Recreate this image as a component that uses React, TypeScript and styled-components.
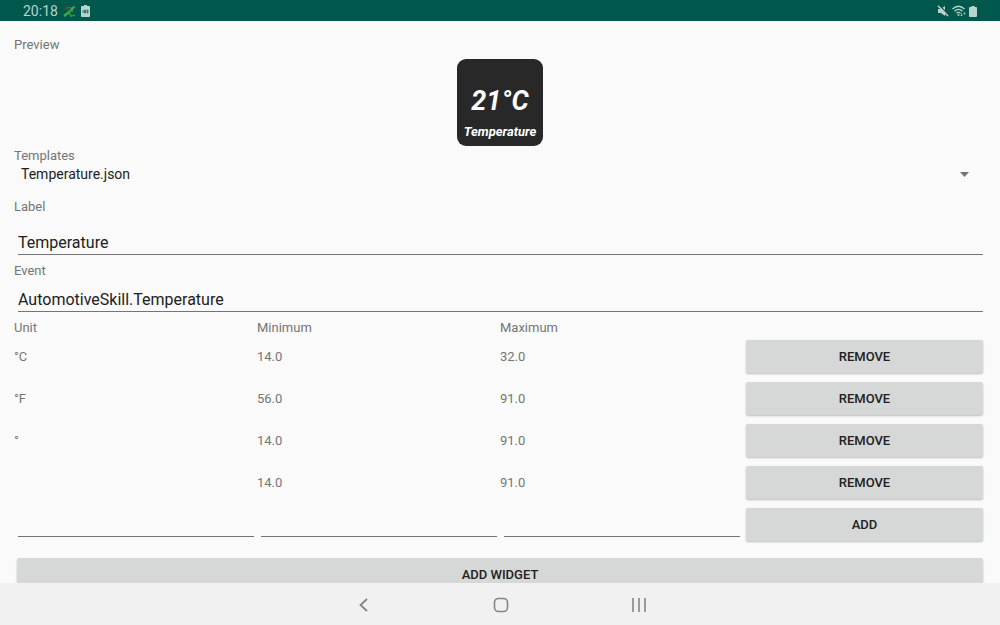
import React from "react";
import styled, { createGlobalStyle } from "styled-components";

const GlobalStyle = createGlobalStyle`
  *, *::before, *::after { box-sizing: border-box; }
  body { margin: 0; background: #fafafa; font-family: Roboto, sans-serif; }
  button, input, select { font-family: inherit; }
`;

const Screen = styled.div`
  display: flex;
  flex-direction: column;
  height: 100vh;
  color: #212121;
`;

const StatusBar = styled.header`
  display: flex;
  flex: none;
  align-items: center;
  justify-content: space-between;
  height: 21px;
  padding: 0 23px;
  background: #00574b;
  color: #b9d3cf;
  font-size: 14px;
  line-height: 21px;
`;

const StatusGroup = styled.div<{ $gap: number }>`
  display: flex;
  align-items: center;
  gap: ${(p) => p.$gap}px;
  padding-top: 1px;
`;

const Content = styled.main`
  flex: 1;
  min-height: 0;
  padding: 15px 14px 0;
  overflow-y: auto;
  scrollbar-width: none;
`;

const Caption = styled.label`
  display: block;
  color: #757575;
  font-size: 13px;
  line-height: 17px;
`;

const Tile = styled.section`
  display: flex;
  flex-direction: column;
  align-items: center;
  justify-content: flex-end;
  width: 86px;
  height: 87px;
  margin: 6px auto 1px;
  padding-bottom: 6px;
  border-radius: 9px;
  background: #282828;
  color: #fff;
  font-style: italic;
  font-weight: 700;
`;

const TileValue = styled.div`
  margin-bottom: 8px;
  font-size: 27px;
  line-height: 30px;
`;

const TileName = styled.div`
  font-size: 13px;
  line-height: 16px;
`;

const Picker = styled.div`
  display: grid;
  align-items: center;
  margin-bottom: 14px;

  > * { grid-area: 1 / 1; }
  > svg { justify-self: end; margin-right: 17px; pointer-events: none; }
`;

const Select = styled.select`
  width: 100%;
  height: 20px;
  padding: 0 7px;
  border: 0;
  appearance: none;
  background: transparent;
  color: #212121;
  font-size: 14px;
`;

const TextField = styled.input<{ $top: number; $bottom: number }>`
  display: block;
  width: calc(100% - 7px);
  height: 25px;
  margin: ${(p) => p.$top}px 3px ${(p) => p.$bottom}px 4px;
  padding: 0;
  border: 0;
  border-bottom: 1px solid #757575;
  border-radius: 0;
  outline: 0;
  background: transparent;
  color: #212121;
  font-size: 16px;
`;

const Table = styled.table`
  width: 100%;
  table-layout: fixed;
  border-collapse: collapse;
  color: #757575;
  font-size: 13px;
  line-height: 16px;

  th { padding: 0; font-weight: 400; text-align: left; }
  td { height: 42px; padding: 0; }
  td:last-child { padding-top: 4px; vertical-align: top; }
`;

const Button = styled.button`
  display: block;
  width: calc(100% - 6px);
  height: 33px;
  margin: 0 3px;
  padding: 0;
  border: 0;
  border-radius: 2px;
  background: #d6d8d7;
  box-shadow: 0 1px 2px rgba(0, 0, 0, 0.25);
  color: #212121;
  font-size: 13px;
  font-weight: 500;
  line-height: 17px;
`;

const Footer = styled.div`
  padding: 12px 0 8px;
`;

const NavBar = styled.nav`
  display: grid;
  flex: none;
  grid-template-columns: 1fr 138px 138px 138px 1fr;
  height: 42px;
  padding: 2px 0 0 2px;
  background: #f1f1f1;
`;

const NavButton = styled.button<{ $column: number }>`
  display: flex;
  grid-column: ${(p) => p.$column};
  align-items: center;
  justify-content: center;
  padding: 0;
  border: 0;
  background: transparent;
  color: #858585;
`;

const ranges = [
  { unit: "°C", min: "14.0", max: "32.0" },
  { unit: "°F", min: "56.0", max: "91.0" },
  { unit: "°", min: "14.0", max: "91.0" },
  { unit: "", min: "14.0", max: "91.0" },
];

const AppIcon = () => (
  <svg width="13" height="13" viewBox="0 0 13 13" fill="none">
    <path d="M2 3.5 5 2.5 9 3" stroke="#8a4a2c" strokeWidth="1.5" />
    <path d="M11.5 1.5 7.5 5.5 5 8 1 11" stroke="#43a84a" strokeWidth="2.4" />
    <path d="M5 6h5M6.5 8l1.5 3 4-1" stroke="#2f9440" strokeWidth="1.8" />
  </svg>
);

const ChargeIcon = () => (
  <svg width="9" height="12" viewBox="0 0 9 12">
    <path d="M3 0h3v1h2q1 0 1 1v9q0 1-1 1H1q-1 0-1-1V2q0-1 1-1h2z" fill="#b9d3cf" />
    <path d="M2 5v3M3.5 5h1v3h-1zM6 5h1v3H6z" fill="none" stroke="#00574b" strokeWidth=".7" />
  </svg>
);

const MutedIcon = () => (
  <svg width="12" height="12" viewBox="0 0 12 12">
    <path d="M1 4h2.5L8 1v10L4 8H1z" fill="#b9d3cf" />
    <path d="M2 0 12 10" stroke="#00574b" strokeWidth="1.2" />
    <path d="M1 .8 11 11" stroke="#b9d3cf" strokeWidth="1.5" />
  </svg>
);

const WifiIcon = () => (
  <svg width="14" height="12" viewBox="0 0 14 12" fill="none" stroke="#b9d3cf">
    <path d="M.5 4Q6.5-1.500 12.5 4M2.5 6.200q4-3.600 8 0M4.500 8.300q2-1.800 4 0" strokeWidth="1.3" />
    <circle cx="6.5" cy="10" r="1" fill="#b9d3cf" stroke="none" />
    <path d="M9.5 8v3M8.500 10l1 1 1-1M12.500 10V7.500M11.500 8.500l1-1 1 1" strokeWidth=".7" />
  </svg>
);

const BatteryIcon = () => (
  <svg width="8" height="11" viewBox="0 0 8 11">
    <path d="M2.5 0h3v1H7q1 0 1 1v8q0 1-1 1H1q-1 0-1-1V2q0-1 1-1h1.500z" fill="#b9d3cf" />
  </svg>
);

export default function App() {
  return (
    <Screen>
      <GlobalStyle />
      <StatusBar>
        <StatusGroup $gap={5}>
          <time>20:18</time>
          <AppIcon />
          <ChargeIcon />
        </StatusGroup>
        <StatusGroup $gap={3}>
          <MutedIcon />
          <WifiIcon />
          <BatteryIcon />
        </StatusGroup>
      </StatusBar>

      <Content>
        <Caption as="div">Preview</Caption>
        <Tile>
          <TileValue>21°C</TileValue>
          <TileName>Temperature</TileName>
        </Tile>

        <Caption htmlFor="template">Templates</Caption>
        <Picker>
          <Select id="template" defaultValue="Temperature.json">
            <option>Temperature.json</option>
          </Select>
          <svg width="9" height="5" viewBox="0 0 9 5">
            <path d="M0 0h9L4.500 5z" fill="#757575" />
          </svg>
        </Picker>

        <Caption htmlFor="label">Label</Caption>
        <TextField id="label" $top={15} $bottom={7} defaultValue="Temperature" />
        <Caption htmlFor="event">Event</Caption>
        <TextField id="event" $top={8} $bottom={8} defaultValue="AutomotiveSkill.Temperature" />

        <Table>
          <thead>
            <tr>
              <th scope="col">Unit</th>
              <th scope="col">Minimum</th>
              <th scope="col">Maximum</th>
              <th aria-label="Action" />
            </tr>
          </thead>
          <tbody>
            {ranges.map((range, index) => (
              <tr key={index}>
                <td>{range.unit}</td>
                <td>{range.min}</td>
                <td>{range.max}</td>
                <td><Button type="button">REMOVE</Button></td>
              </tr>
            ))}
            <tr>
              <td><TextField aria-label="Unit" $top={8} $bottom={9} /></td>
              <td><TextField aria-label="Minimum" $top={8} $bottom={9} /></td>
              <td><TextField aria-label="Maximum" $top={8} $bottom={9} /></td>
              <td><Button type="button">ADD</Button></td>
            </tr>
          </tbody>
        </Table>
        <Footer>
          <Button type="button">ADD WIDGET</Button>
        </Footer>
      </Content>

      <NavBar>
        <NavButton type="button" aria-label="Back" $column={2}>
          <svg width="10" height="14" viewBox="0 0 10 14" fill="none" stroke="currentColor" strokeWidth="1.8">
            <path d="M9 1 2.500 7 9 13" />
          </svg>
        </NavButton>
        <NavButton type="button" aria-label="Home" $column={3}>
          <svg width="16" height="16" viewBox="0 0 16 16" fill="none" stroke="currentColor" strokeWidth="1.6">
            <rect x="1.500" y="1.500" width="13" height="13" rx="4" />
          </svg>
        </NavButton>
        <NavButton type="button" aria-label="Recent apps" $column={4}>
          <svg width="14" height="14" viewBox="0 0 14 14" fill="none" stroke="currentColor" strokeWidth="1.6">
            <path d="M1 0v14M7 0v14M13 0v14" />
          </svg>
        </NavButton>
      </NavBar>
    </Screen>
  );
}
